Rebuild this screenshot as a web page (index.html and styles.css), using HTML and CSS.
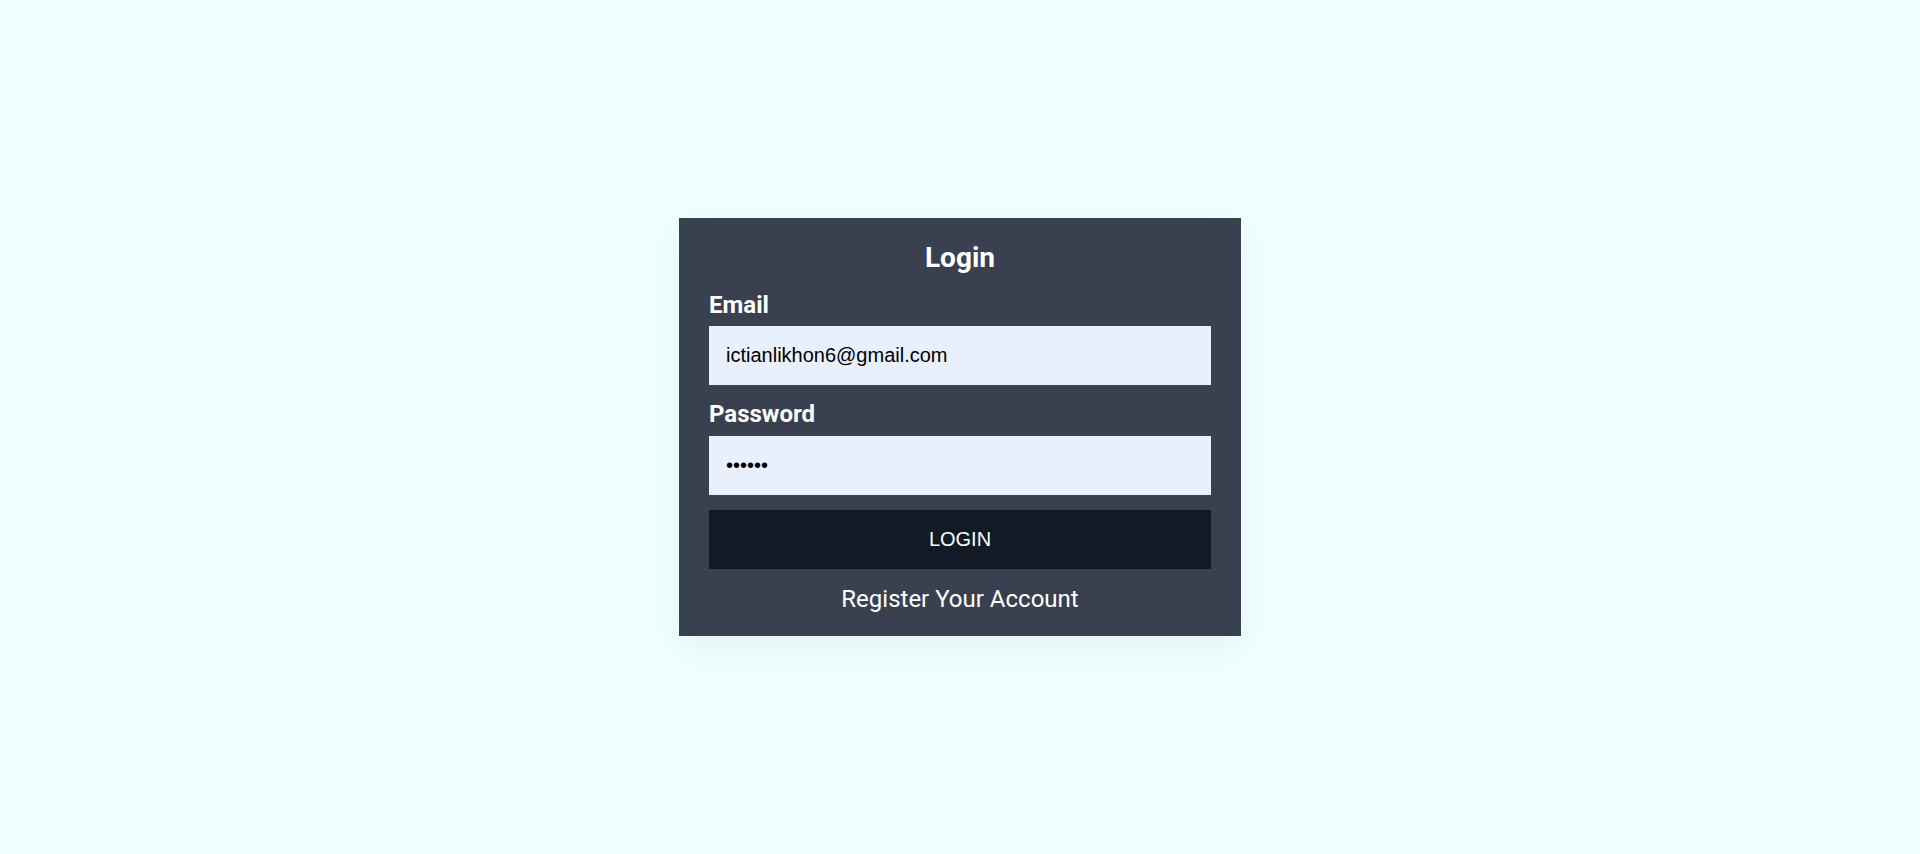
FILE: index.html
```html
<!DOCTYPE html>
<html lang="en">
<head>
<meta charset="utf-8">
<title>Login</title>
<link rel="stylesheet" href="styles.css">
</head>
<body>
<main class="page">
  <form class="card">
    <h1 class="title">Login</h1>
    <label class="label" for="email">Email</label>
    <input class="field" id="email" type="email" value="ictianlikhon6@gmail.com">
    <label class="label label-gap" for="password">Password</label>
    <input class="field field-gap" id="password" type="password" value="123456">
    <button class="btn" type="button">LOGIN</button>
    <a class="register" href="#">Register Your Account</a>
  </form>
</main>
</body>
</html>
```
FILE: styles.css
```css
* { box-sizing: border-box; }
html, body { margin: 0; padding: 0; }
body {
  background: #f0ffff;
  font-family: Roboto, "Liberation Sans", Arial, sans-serif;
}
.page {
  min-height: 854px;
  display: flex;
  align-items: center;
  justify-content: center;
}
.card {
  width: 562px;
  height: 418px;
  background: #394150;
  padding: 22px 30px 20px;
  display: flex;
  flex-direction: column;
  box-shadow: 0 12px 40px rgba(0, 0, 0, 0.06);
}
.title {
  margin: 0;
  font-size: 28px;
  line-height: 36px;
  font-weight: 700;
  color: #ffffff;
  text-align: center;
}
.label {
  margin-top: 13px;
  font-size: 24px;
  line-height: 32px;
  font-weight: 700;
  color: #ffffff;
}
.label-gap { margin-top: 13px; }
.field {
  margin-top: 5px;
  width: 100%;
  height: 59px;
  border: none;
  outline: none;
  padding: 0 17px;
  background: #e8f0fe;
  color: #000000;
  font-family: "Liberation Sans", Arial, sans-serif;
  font-size: 20px;
}
.field-gap { margin-top: 6px; }
.btn {
  margin-top: 15px;
  width: 100%;
  height: 59px;
  border: none;
  background: #121b25;
  color: #ffffff;
  font-family: "Liberation Sans", Arial, sans-serif;
  font-size: 20px;
  cursor: pointer;
}
.register {
  margin-top: 14px;
  font-size: 24px;
  line-height: 32px;
  color: #ffffff;
  text-align: center;
  text-decoration: none;
}
```
